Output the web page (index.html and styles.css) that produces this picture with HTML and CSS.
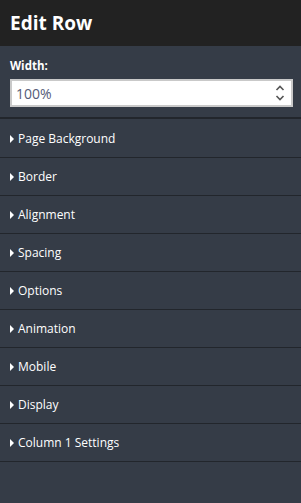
FILE: index.html
```html
<!DOCTYPE html>
<html lang="en">
<head>
    <meta charset="UTF-8">
    <meta name="viewport" content="width=device-width, initial-scale=1.0">
    <title>Edit Row</title>
    <link rel="stylesheet" href="styles.css">
</head>
<body>
    <div class="panel">
        <div class="panel-header">Edit Row</div>

        <div class="field">
            <label class="field-label">Width:</label>
            <div class="number-input">
                <span class="number-value">100%</span>
                <svg class="spinner" width="10" height="18" viewBox="0 0 10 18">
                    <path d="M1.5 6 L5 2.5 L8.5 6" fill="none" stroke="#555" stroke-width="1.6"/>
                    <path d="M1.5 12 L5 15.5 L8.5 12" fill="none" stroke="#555" stroke-width="1.6"/>
                </svg>
            </div>
        </div>

        <ul class="sections">
            <li class="section">Page Background</li>
            <li class="section">Border</li>
            <li class="section">Alignment</li>
            <li class="section">Spacing</li>
            <li class="section">Options</li>
            <li class="section">Animation</li>
            <li class="section">Mobile</li>
            <li class="section">Display</li>
            <li class="section">Column 1 Settings</li>
        </ul>
    </div>
</body>
</html>
```

FILE: styles.css
```css
body {
    font-family: "Open Sans", Arial, sans-serif;
    margin: 0;
    padding: 0;
    background-color: #353c47;
    color: #fff;
}
.panel {
    width: 301px;
    min-height: 503px;
    background-color: #353c47;
}
.panel-header {
    background-color: #222222;
    height: 46px;
    box-sizing: border-box;
    padding: 9px 10px 0;
    font-size: 19px;
    font-weight: bold;
    line-height: 28px;
}
.field {
    padding: 12px 8px 10px 10px;
    border-bottom: 2px solid #22262c;
}
.field-label {
    display: block;
    font-size: 11.5px;
    font-weight: bold;
    line-height: 16px;
    margin-bottom: 5px;
}
.number-input {
    display: flex;
    align-items: center;
    justify-content: space-between;
    height: 24px;
    background: #fff;
    border: 2px solid #c9c9c9;
    padding: 0 6px 0 4px;
}
.number-value {
    font-size: 14px;
    color: #555b78;
}
.sections {
    list-style: none;
    margin: 1px 0 0;
    padding: 0;
}
.section {
    height: 37px;
    line-height: 37px;
    border-bottom: 1px solid #22262c;
    padding-left: 10px;
    font-size: 12px;
    display: flex;
    align-items: center;
}
.section::before {
    content: "";
    border-left: 4px solid #fff;
    border-top: 4px solid transparent;
    border-bottom: 4px solid transparent;
    margin-right: 4px;
}
```
